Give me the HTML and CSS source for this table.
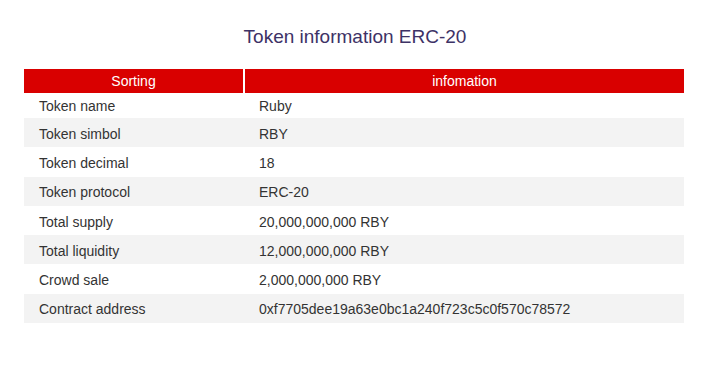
FILE: index.html
```html
<!DOCTYPE html>
<html lang="en">
<head>
<meta charset="utf-8">
<title>Token information ERC-20</title>
<link rel="stylesheet" href="styles.css">
</head>
<body>
<main class="page">
  <h1 class="title">Token information ERC-20</h1>
  <div class="table">
    <div class="head">
      <div class="hcell">Sorting</div>
      <div class="hcell">infomation</div>
    </div>
    <div class="row first"><div class="c1">Token name</div><div class="c2">Ruby</div></div>
    <div class="row alt"><div class="c1">Token simbol</div><div class="c2">RBY</div></div>
    <div class="row"><div class="c1">Token decimal</div><div class="c2">18</div></div>
    <div class="row alt"><div class="c1">Token protocol</div><div class="c2">ERC-20</div></div>
    <div class="row"><div class="c1">Total supply</div><div class="c2">20,000,000,000 RBY</div></div>
    <div class="row alt"><div class="c1">Total liquidity</div><div class="c2">12,000,000,000 RBY</div></div>
    <div class="row"><div class="c1">Crowd sale</div><div class="c2">2,000,000,000 RBY</div></div>
    <div class="row alt"><div class="c1">Contract address</div><div class="c2">0xf7705dee19a63e0bc1a240f723c5c0f570c78572</div></div>
  </div>
</main>
</body>
</html>
```

FILE: styles.css
```css
html, body {
  margin: 0;
  padding: 0;
  background: #ffffff;
}
body {
  font-family: "Liberation Sans", Arial, sans-serif;
}
.page {
  padding: 26px 28px 0 24px;
}
.title {
  margin: 0 0 21px 0;
  font-size: 19px;
  line-height: 22px;
  font-weight: normal;
  color: #3d3266;
  text-align: center;
  padding-left: 2px;
}
.table {
  width: 660px;
  font-size: 14px;
  color: #333333;
}
.head {
  display: grid;
  grid-template-columns: 219px 1fr;
  column-gap: 2px;
  height: 23px;
}
.hcell {
  background: #d90000;
  color: #ffffff;
  text-align: center;
  line-height: 23px;
  padding-top: 1px;
  box-sizing: border-box;
}
.row {
  display: grid;
  grid-template-columns: 219px 1fr;
  column-gap: 2px;
  height: 29.3px;
  align-items: center;
  padding-top: 2px;
  box-sizing: border-box;
}
.row.first {
  height: 26px;
}
.row.alt {
  background: #f3f3f3;
}
.c1 {
  padding-left: 15px;
}
.c2 {
  padding-left: 14px;
}
```
